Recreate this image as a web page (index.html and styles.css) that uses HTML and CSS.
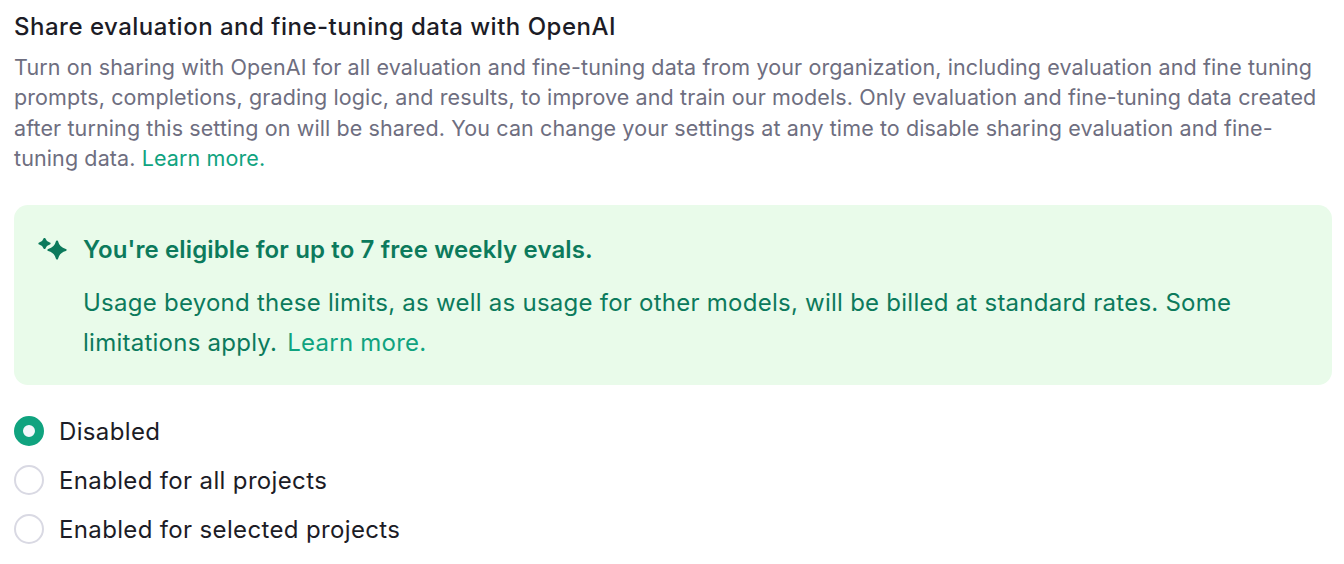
FILE: index.html
```html
<!DOCTYPE html>
<html lang="en">

<head>
    <meta charset="UTF-8">
    <meta name="viewport" content="width=device-width, initial-scale=1.0">
    <title>Data sharing</title>
    <link rel="stylesheet" href="styles.css">
</head>

<body>
    <section class="setting">
        <h2 class="title">Share evaluation and fine-tuning data with OpenAI</h2>
        <p class="desc">Turn on sharing with OpenAI for all evaluation and fine-tuning data from your organization, including evaluation and fine tuning<br>
            prompts, completions, grading logic, and results, to improve and train our models. Only evaluation and fine-tuning data created<br>
            after turning this setting on will be shared. You can change your settings at any time to disable sharing evaluation and fine-<br>
            tuning data. <a href="#" class="link">Learn more.</a></p>

        <div class="notice">
            <svg class="notice-icon" viewBox="0 0 30 24" width="30" height="24">
                <path d="M19 3.500 C20 8 22 10.500 27.500 12 C22 13.500 20 16 19 20.500 C18 16 16 13.500 10.500 12 C16 10.500 18 8 19 3.500 Z" />
                <path d="M6.500 1 C7 3 8.200 4.500 11.500 5.500 C8.200 6.500 7 8 6.500 10 C6 8 4.800 6.500 1.500 5.500 C4.800 4.500 6 3 6.500 1 Z" />
            </svg>
            <div class="notice-body">
                <h3 class="notice-title">You're eligible for up to 7 free weekly evals.</h3>
                <p class="notice-text">Usage beyond these limits, as well as usage for other models, will be billed at standard rates. Some<br>
                    limitations apply. <a href="#" class="notice-link">Learn more.</a></p>
            </div>
        </div>

        <div class="options">
            <label class="option">
                <input type="radio" name="sharing" checked>
                <span>Disabled</span>
            </label>
            <label class="option">
                <input type="radio" name="sharing">
                <span>Enabled for all projects</span>
            </label>
            <label class="option">
                <input type="radio" name="sharing">
                <span>Enabled for selected projects</span>
            </label>
        </div>
    </section>
</body>

</html>
```

FILE: styles.css
```css
* {
    box-sizing: border-box;
    padding: 0;
    margin: 0;
}

body {
    font-family: Inter, "Noto Sans", sans-serif;
    background-color: #fff;
    overflow: hidden;
}

.setting {
    padding: 11px 12px 0 14px;
}

.title {
    font-size: 24px;
    line-height: 31px;
    font-weight: 500;
    letter-spacing: 0.500px;
    color: #1c1c26;
}

.desc {
    margin-top: 10px;
    font-size: 21.500px;
    line-height: 30.400px;
    letter-spacing: 0.110px;
    color: #6e6e80;
    white-space: nowrap;
}

.link {
    color: #10a37f;
    text-decoration: none;
}

.notice {
    display: flex;
    gap: 15px;
    height: 180px;
    margin-top: 31.400px;
    padding: 25px 24px;
    border-radius: 14px;
    background-color: #e9fbea;
    color: #0c7a5c;
}

.notice-icon {
    flex-shrink: 0;
    margin-top: 8px;
    fill: #0c7a5c;
    stroke: #0c7a5c;
    stroke-width: 2.200px;
    stroke-linejoin: round;
}

.notice-title {
    font-size: 24px;
    line-height: 40px;
    font-weight: 600;
    letter-spacing: 0.130px;
}

.notice-text {
    margin-top: 13px;
    font-size: 24px;
    line-height: 40px;
    letter-spacing: 0.250px;
    white-space: nowrap;
}

.notice-link {
    margin-left: 3px;
    color: #10a37f;
    text-decoration: none;
}

.options {
    display: flex;
    flex-direction: column;
    gap: 19px;
    margin-top: 31px;
}

.option {
    display: flex;
    align-items: center;
    gap: 15px;
    height: 30px;
    font-size: 24px;
    letter-spacing: 0.350px;
    color: #1c1c26;
}

.option span {
    padding-top: 1px;
}

.option input {
    appearance: none;
    width: 30px;
    height: 30px;
    border: 2px solid #d9d9e3;
    border-radius: 50%;
    background-color: #fff;
}

.option input:checked {
    border: 9.500px solid #10a37f;
    background-color: #f4f7fb;
}
```
